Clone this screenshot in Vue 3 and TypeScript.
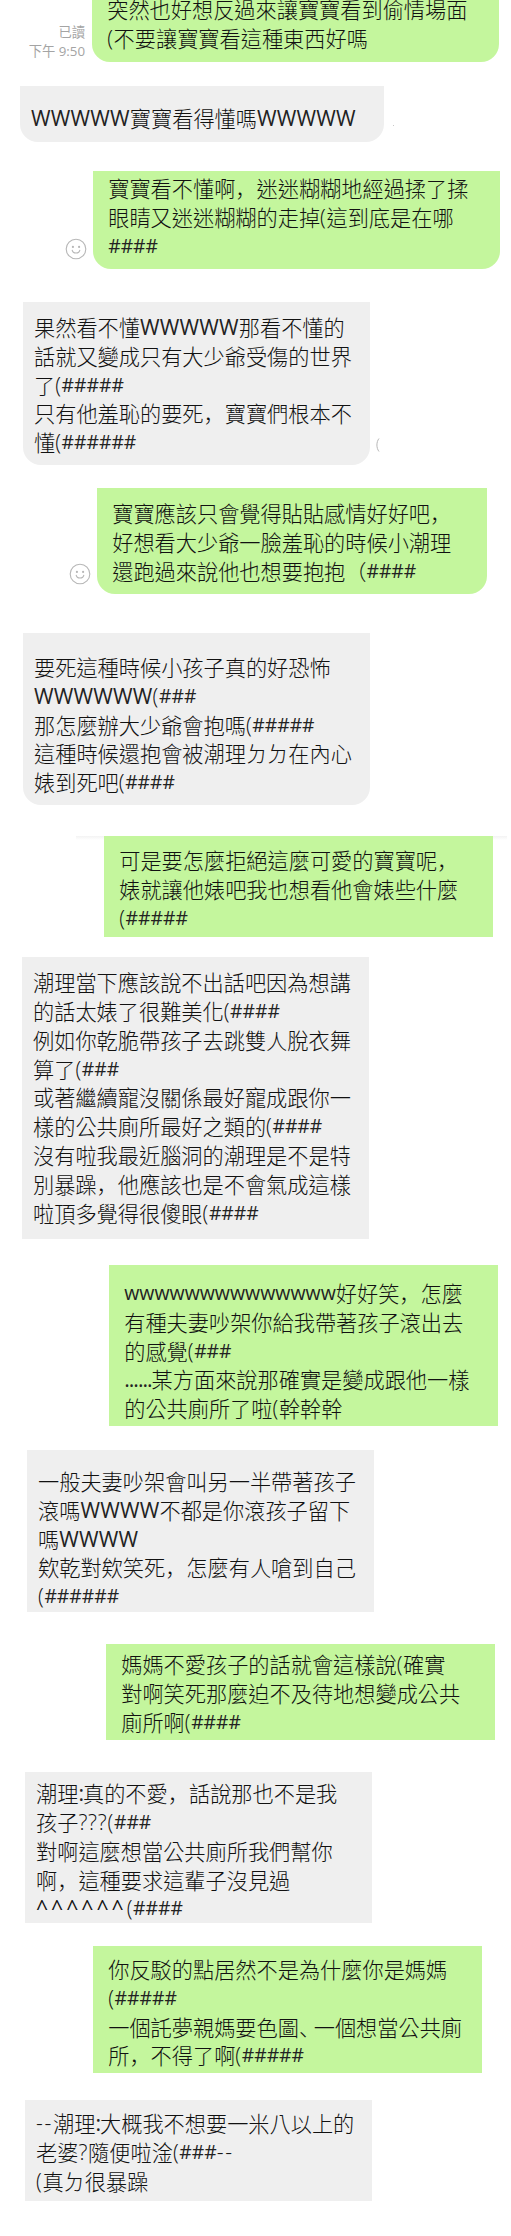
<script setup lang="ts">
interface Message {
  id: string;
  mine?: boolean;
  rounded?: boolean;
  read?: boolean;
  smile?: boolean;
  rule?: boolean;
  trace?: "dot" | "arc";
  lines: string[];
}

interface Run {
  text: string;
  kind: string;
}

const messages: Message[] = [
  {
    id: "m1",
    mine: true,
    rounded: true,
    read: true,
    lines: ["突然也好想反過來讓寶寶看到偷情場面", "(不要讓寶寶看這種東西好嗎"],
  },
  { id: "m2", rounded: true, trace: "dot", lines: ["WWWWW寶寶看得懂嗎WWWWW"] },
  {
    id: "m3",
    mine: true,
    rounded: true,
    smile: true,
    lines: ["寶寶看不懂啊，迷迷糊糊地經過揉了揉", "眼睛又迷迷糊糊的走掉(這到底是在哪", "####"],
  },
  {
    id: "m4",
    rounded: true,
    trace: "arc",
    lines: [
      "果然看不懂WWWWW那看不懂的",
      "話就又變成只有大少爺受傷的世界",
      "了(#####",
      "只有他羞恥的要死，寶寶們根本不",
      "懂(######",
    ],
  },
  {
    id: "m5",
    mine: true,
    rounded: true,
    smile: true,
    lines: [
      "寶寶應該只會覺得貼貼感情好好吧，",
      "好想看大少爺一臉羞恥的時候小潮理",
      "還跑過來說他也想要抱抱（####",
    ],
  },
  {
    id: "m6",
    rounded: true,
    lines: [
      "要死這種時候小孩子真的好恐怖",
      "WWWWWW(###",
      "那怎麼辦大少爺會抱嗎(#####",
      "這種時候還抱會被潮理ㄉㄉ在內心",
      "婊到死吧(####",
    ],
  },
  {
    id: "m7",
    mine: true,
    rule: true,
    lines: ["可是要怎麼拒絕這麼可愛的寶寶呢，", "婊就讓他婊吧我也想看他會婊些什麼", "(#####"],
  },
  {
    id: "m8",
    lines: [
      "潮理當下應該說不出話吧因為想講",
      "的話太婊了很難美化(####",
      "例如你乾脆帶孩子去跳雙人脫衣舞",
      "算了(###",
      "或著繼續寵沒關係最好寵成跟你一",
      "樣的公共廁所最好之類的(####",
      "沒有啦我最近腦洞的潮理是不是特",
      "別暴躁，他應該也是不會氣成這樣",
      "啦頂多覺得很傻眼(####",
    ],
  },
  {
    id: "m9",
    mine: true,
    lines: [
      "wwwwwwwwwwwwww好好笑，怎麼",
      "有種夫妻吵架你給我帶著孩子滾出去",
      "的感覺(###",
      "......某方面來說那確實是變成跟他一樣",
      "的公共廁所了啦(幹幹幹",
    ],
  },
  {
    id: "m10",
    lines: [
      "一般夫妻吵架會叫另一半帶著孩子",
      "滾嗎WWWW不都是你滾孩子留下",
      "嗎WWWW",
      "欸乾對欸笑死，怎麼有人嗆到自己",
      "(######",
    ],
  },
  {
    id: "m11",
    mine: true,
    lines: ["媽媽不愛孩子的話就會這樣說(確實", "對啊笑死那麼迫不及待地想變成公共", "廁所啊(####"],
  },
  {
    id: "m12",
    lines: [
      "潮理:真的不愛，話說那也不是我",
      "孩子???(###",
      "對啊這麼想當公共廁所我們幫你",
      "啊，這種要求這輩子沒見過",
      "^^^^^^(####",
    ],
  },
  {
    id: "m13",
    mine: true,
    lines: [
      "你反駁的點居然不是為什麼你是媽媽",
      "(#####",
      "一個託夢親媽要色圖、一個想當公共廁",
      "所，不得了啊(#####",
    ],
  },
  {
    id: "m14",
    lines: ["--潮理:大概我不想要一米八以上的", "老婆?隨便啦淦(###--", "(真ㄉ很暴躁"],
  },
];

const kinds: Record<string, string> = {
  W: "upper",
  w: "lower",
  "#": "hash",
  "^": "caret",
  "-": "dash",
  ".": "dot",
  ":": "dot",
  "?": "question",
  "(": "paren",
  "，": "comma",
  "、": "pause",
};

// groups neighbouring characters that share the same spacing
function toRuns(line: string): Run[] {
  const runs: Run[] = [];
  for (const char of line) {
    const kind = kinds[char] ?? "han";
    const last = runs[runs.length - 1];
    if (last && last.kind === kind) last.text += char;
    else runs.push({ text: char, kind });
  }
  return runs;
}
</script>

<template>
  <main class="chat">
    <section
      v-for="message in messages"
      :key="message.id"
      :class="['row', message.id, { ruled: message.rule }]"
    >
      <div class="meta">
        <p v-if="message.read" class="read">已讀<br />下午 9:50</p>
        <svg v-if="message.smile" class="smile" viewBox="0 0 22 22">
          <circle cx="11" cy="11" r="9.8" />
          <path d="M7.1 11.8c.7 4.2 7.1 4.2 7.8 0" />
          <circle class="eye" cx="7.9" cy="8.9" r="1.1" />
          <circle class="eye" cx="14.1" cy="8.9" r="1.1" />
        </svg>
      </div>
      <div :class="['bubble', { mine: message.mine, rounded: message.rounded }]">
        <p v-for="line in message.lines" :key="line" class="line">
          <span v-for="(run, index) in toRuns(line)" :key="index" :class="run.kind">{{ run.text }}</span>
        </p>
      </div>
      <div class="trail">
        <i v-if="message.trace === 'dot'" class="trace-dot"></i>
        <svg v-if="message.trace === 'arc'" class="trace-arc" viewBox="0 0 4 14">
          <path d="M3 .5C.2 4 .2 10 3 13.5" />
        </svg>
      </div>
    </section>
  </main>
</template>

<style>
body {
  margin: 0;
  background: #fff;
}
</style>

<style scoped>
.chat {
  box-sizing: border-box;
  width: 511px;
  height: 2236px;
  overflow: hidden;
  display: flex;
  flex-direction: column;
  background: #fff;
  color: #111;
  font-family: "Open Sans", "Noto Sans CJK TC", sans-serif;
  font-size: 21.2px;
  font-weight: 400;
}

.row {
  flex: none;
  display: grid;
  grid-template-columns: var(--x) var(--w) 1fr;
  height: var(--h);
  margin-top: var(--gap);
}

.bubble {
  box-sizing: border-box;
  padding: calc(var(--top) - 1px) 0 0 var(--left, 11.5px);
  background: #efefef;
}

.bubble.mine {
  --left: 15.2px;
  background: #c4f69d;
}

.bubble.rounded {
  border-radius: 0 0 18px 18px;
}

.line {
  height: 28.8px;
  margin: 0;
  line-height: 28.8px;
  white-space: pre;
}

.line span {
  display: inline-block;
  height: 28.8px;
  vertical-align: top;
}

.han {
  font-family: "Noto Sans CJK TC", sans-serif;
  font-weight: 300;
}

.upper {
  color: #222;
  letter-spacing: 0.2px;
}

.lower {
  color: #222;
  font-size: 19.5px;
}

.hash {
  color: #222;
  font-size: 19.3px;
}

.paren {
  font-weight: 300;
  letter-spacing: 0.6px;
}

.caret {
  letter-spacing: 3px;
}

.dash {
  font-weight: 300;
  letter-spacing: 1.7px;
}

.dot {
  color: #222;
  letter-spacing: -1px;
}

.question {
  font-weight: 300;
  letter-spacing: 0.8px;
}

.comma,
.pause {
  font-family: "Noto Sans CJK JP", sans-serif;
  font-weight: 300;
}

.pause {
  letter-spacing: -6.4px;
}

.meta {
  display: flex;
  flex-direction: column;
  justify-content: flex-end;
  align-items: flex-end;
}

.read {
  margin: 0 7px 1px 0;
  color: #a4a4a4;
  font-family: "Open Sans", "Noto Sans CJK TC", sans-serif;
  font-size: 13.3px;
  line-height: 19px;
  text-align: right;
}

.smile {
  width: 22px;
  height: 22px;
  margin: 0 6.5px 8.7px 0;
  fill: none;
  stroke: #b7b7b7;
  stroke-width: 1.1;
}

.smile .eye {
  fill: #b7b7b7;
  stroke: none;
}

.trail {
  display: flex;
  align-items: flex-end;
}

.trace-dot {
  width: 1px;
  height: 1px;
  margin: 0 0 16px 9px;
  background: #c8c8c8;
}

.trace-arc {
  width: 4px;
  height: 14px;
  margin: 0 0 12.5px 5.5px;
  fill: none;
  stroke: #b7b7b7;
}

.ruled {
  background: linear-gradient(#f3f3f3, #fff) 76px 0 / 431px 4px no-repeat;
}

.m1 { --x: 92px; --w: 407px; --h: 72px; --gap: -10px; --top: 5.9px; }
.m2 { --x: 19.5px; --w: 364.5px; --h: 56px; --gap: 24px; --top: 19px; }
.m3 { --x: 93px; --w: 407px; --h: 98px; --gap: 29px; --top: 4px; }
.m4 { --x: 22.5px; --w: 347.5px; --h: 162.7px; --gap: 33px; --top: 12px; }
.m5 { --x: 97px; --w: 390px; --h: 105.7px; --gap: 23.3px; --top: 12px; }
.m6 { --x: 22.5px; --w: 347.5px; --h: 171.7px; --gap: 39.3px; --top: 21px; }
.m7 { --x: 104px; --w: 389.3px; --h: 101px; --gap: 31.3px; --top: 11.3px; }
.m8 { --x: 21.5px; --w: 347.5px; --h: 282px; --gap: 20px; --top: 12.3px; }
.m9 { --x: 109px; --w: 389.3px; --h: 161px; --gap: 26px; --top: 15px; }
.m10 { --x: 26.5px; --w: 347.5px; --h: 162px; --gap: 24px; --top: 18px; }
.m11 { --x: 106px; --w: 389.3px; --h: 96px; --gap: 32px; --top: 7.3px; }
.m12 { --x: 24.5px; --w: 347.5px; --h: 150px; --gap: 32px; --top: 8.3px; }
.m13 { --x: 93px; --w: 389.3px; --h: 127px; --gap: 24px; --top: 10px; }
.m14 { --x: 24.5px; --w: 347.5px; --h: 101px; --gap: 27px; --top: 10.3px; }
</style>
